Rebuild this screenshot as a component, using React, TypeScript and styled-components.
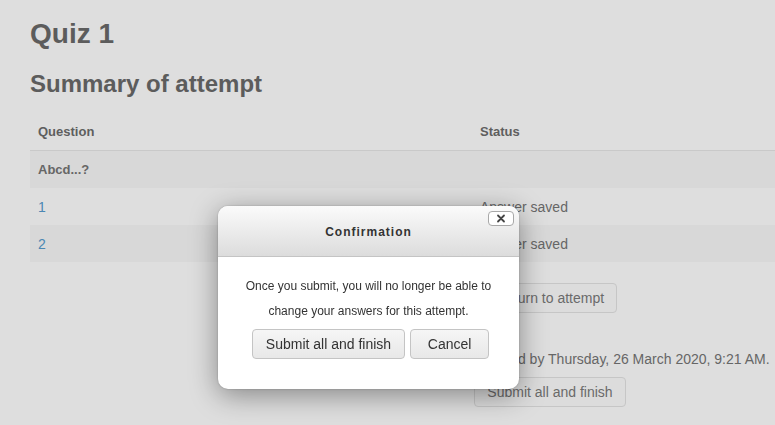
import React from "react";
import styled, { createGlobalStyle } from "styled-components";

const GlobalStyle = createGlobalStyle`
  html, body {
    margin: 0;
    padding: 0;
    background: #dedede;
    overflow: hidden;
  }
  body {
    font-family: "Liberation Sans", Arial, Helvetica, sans-serif;
    color: #5e5e5e;
  }
`;

const Page = styled.div`
  width: 1040px;
  padding: 18px 0 0 30px;
  height: 425px;
  box-sizing: content-box;
`;

const Title = styled.h2`
  margin: 0;
  font-size: 28px;
  line-height: 32px;
  font-weight: bold;
  color: #5c5c5c;
`;

const SubTitle = styled.h3`
  margin: 20px 0 0;
  font-size: 24px;
  line-height: 28px;
  font-weight: bold;
  color: #5c5c5c;
`;

const Table = styled.table`
  margin-top: 14px;
  width: 100%;
  border-collapse: collapse;
  font-size: 14px;
`;

const HeadCell = styled.th<{ $w?: number }>`
  text-align: left;
  font-size: 13px;
  font-weight: bold;
  height: 38px;
  padding: 0 8px;
  color: #5e5e5e;
  width: ${(p) => (p.$w ? `${p.$w}px` : "auto")};
  border-bottom: 1px solid #c9c9c9;
`;

const Row = styled.tr<{ $striped?: boolean }>`
  background: ${(p) => (p.$striped ? "#d8d8d8" : "transparent")};
  & + & td {
    border-top: 1px solid #c9c9c9;
  }
`;

const Cell = styled.td<{ $bold?: boolean }>`
  height: 37px;
  padding: 0 8px;
  font-size: ${(p) => (p.$bold ? "13px" : "14px")};
  font-weight: ${(p) => (p.$bold ? "bold" : "normal")};
  color: #666;
`;

const QLink = styled.a`
  color: #4b87b3;
  text-decoration: none;
`;

const Controls = styled.div`
  display: flex;
  flex-direction: column;
  align-items: center;
  margin-top: 21px;
`;

const PageButton = styled.button`
  font-family: inherit;
  font-size: 14px;
  color: #6a6a6a;
  background: #dcdcdc;
  border: 1px solid #c6c6c6;
  border-radius: 4px;
  height: 30px;
  padding: 0 12px;
`;

const Deadline = styled.div`
  font-size: 14px;
  color: #666;
  margin: 38px 0 10px;
  line-height: 16px;
`;

const Dialog = styled.div`
  position: fixed;
  left: 218px;
  top: 206px;
  width: 301px;
  height: 183px;
  background: #fff;
  border-radius: 10px;
  box-shadow: 0 6px 28px rgba(0, 0, 0, 0.4), 0 0 2px rgba(0, 0, 0, 0.25);
  display: flex;
  flex-direction: column;
  overflow: hidden;
`;

const DialogHeader = styled.div`
  height: 51px;
  flex: none;
  display: flex;
  align-items: center;
  justify-content: center;
  position: relative;
  background: linear-gradient(#fbfbfb, #dcdcdc);
  border-bottom: 1px solid #c4c4c4;
  font-size: 12px;
  font-weight: bold;
  letter-spacing: 1px;
  color: #333;
  padding-top: 1px;
  box-sizing: border-box;
`;

const CloseButton = styled.button`
  position: absolute;
  top: 5px;
  right: 5px;
  width: 26px;
  height: 15px;
  padding: 0;
  background: #fff;
  border: 1px solid #a8a8a8;
  border-radius: 4px;
  display: grid;
  place-items: center;
`;

const DialogBody = styled.div`
  padding-top: 17px;
  text-align: center;
  font-size: 12px;
  line-height: 25px;
  color: #333;
`;

const DialogButtons = styled.div`
  display: flex;
  justify-content: center;
  gap: 5px;
  margin-top: 5px;
  padding-left: 4px;
`;

const DialogButton = styled.button`
  font-family: inherit;
  font-size: 14px;
  color: #333;
  height: 30px;
  min-width: 79px;
  padding: 0 13px;
  background: linear-gradient(#f6f6f6, #e8e8e8);
  border: 1px solid #c4c4c4;
  border-radius: 4px;
`;

export default function App() {
  return (
    <>
      <GlobalStyle />
      <Page>
        <Title>Quiz 1</Title>
        <SubTitle>Summary of attempt</SubTitle>
        <Table>
          <thead>
            <tr>
              <HeadCell $w={426}>Question</HeadCell>
              <HeadCell>Status</HeadCell>
            </tr>
          </thead>
          <tbody>
            <Row $striped>
              <Cell $bold colSpan={2}>Abcd...?</Cell>
            </Row>
            <Row>
              <Cell><QLink href="#">1</QLink></Cell>
              <Cell>Answer saved</Cell>
            </Row>
            <Row $striped>
              <Cell><QLink href="#">2</QLink></Cell>
              <Cell>Answer saved</Cell>
            </Row>
          </tbody>
        </Table>
        <Controls>
          <PageButton>Return to attempt</PageButton>
          <Deadline>This attempt must be submitted by Thursday, 26 March 2020, 9:21 AM.</Deadline>
          <PageButton>Submit all and finish</PageButton>
        </Controls>
      </Page>
      <Dialog>
        <DialogHeader>
          Confirmation
          <CloseButton aria-label="Close">
            <svg width="10" height="9" viewBox="0 0 10 9">
              <path d="M2 1.5 L8 7.5 M8 1.5 L2 7.5" stroke="#444" strokeWidth="1.8" strokeLinecap="round" />
            </svg>
          </CloseButton>
        </DialogHeader>
        <DialogBody>
          Once you submit, you will no longer be able to
          <br />
          change your answers for this attempt.
          <DialogButtons>
            <DialogButton>Submit all and finish</DialogButton>
            <DialogButton>Cancel</DialogButton>
          </DialogButtons>
        </DialogBody>
      </Dialog>
    </>
  );
}
